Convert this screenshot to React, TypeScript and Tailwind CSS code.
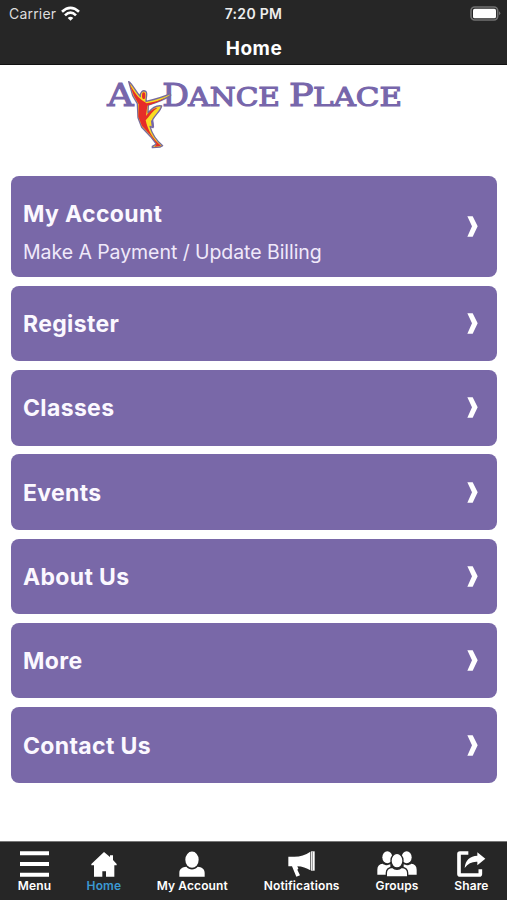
import React from 'react';

interface MenuItem {
  title: string;
  subtitle?: string;
}

interface Tab {
  label: string;
  width: string;
  icon: React.ReactNode;
  active?: boolean;
}

const menuItems: MenuItem[] = [
  { title: 'My Account', subtitle: 'Make A Payment / Update Billing' },
  { title: 'Register' },
  { title: 'Classes' },
  { title: 'Events' },
  { title: 'About Us' },
  { title: 'More' },
  { title: 'Contact Us' },
];

const MenuIcon = () => (
  <svg width="29" height="26" viewBox="0 0 87 78" fill="currentColor">
    <path d="M0 1h87v12H0zM0 33h87v12H0zM0 65h87v12H0z" />
  </svg>
);

const HomeIcon = () => (
  <svg width="26" height="26" viewBox="0 0 78 78" fill="currentColor">
    <path d="M39 3 L57 18 V13 H66 V27 L77 39 V43 H70 V77 H45 V61 H34 V77 H9 V43 H1 V39Z" />
  </svg>
);

const AccountIcon = () => (
  <svg width="26" height="26" viewBox="0 0 78 78" fill="currentColor">
    <ellipse cx="39" cy="26" rx="20" ry="24.500" />
    <path d="M1 77V66C1 53 10 48 22 47C31 58 47 58 56 47C68 48 77 53 77 66V77Z" />
  </svg>
);

const NotificationsIcon = () => (
  <svg width="27" height="26" viewBox="0 0 81 78" fill="currentColor">
    <path d="M1 17 H19 C37 17 52 12 67 2 V58 C56 51 42 46 28 46 L31 53 L28 56 L36 73 L25 77 L12 46 H1Z" />
    <path d="M69 1h11v58H69z" />
    <path d="M73 2v56" stroke="#555555" strokeWidth="2" />
  </svg>
);

const GroupsIcon = () => (
  <svg width="40" height="26" viewBox="0 0 120 78" fill="currentColor">
    <ellipse cx="31" cy="19" rx="15" ry="18" />
    <ellipse cx="89" cy="19" rx="15" ry="18" />
    <path d="M1 71V56C1 45 7 39 17 38C24 43 32 44 40 40V71ZM119 71V56C119 45 113 39 103 38C96 43 88 44 80 40V71Z" />
    <path
      d="M28 78V66C28 54 34 50 46 49C54 57 66 57 74 49C86 50 92 54 92 66V78Z"
      stroke="#262626"
      strokeWidth="4"
    />
    <ellipse cx="60" cy="29" rx="18" ry="22" stroke="#262626" strokeWidth="4" />
  </svg>
);

const ShareIcon = () => (
  <svg width="29" height="26" viewBox="0 0 87 78" fill="currentColor">
    <path d="M34 6H9Q6 6 6 9V69Q6 72 9 72H67Q70 72 70 69V55" fill="none" stroke="currentColor" strokeWidth="11" />
    <path d="M23 51C25 27 39 15 61 14V4L85 23L61 43V32C46 31 33 37 23 51Z" />
  </svg>
);

const tabs: Tab[] = [
  { label: 'Menu', width: 'w-[33px]', icon: <MenuIcon /> },
  { label: 'Home', width: 'w-[35px]', icon: <HomeIcon />, active: true },
  { label: 'My Account', width: 'w-[71px]', icon: <AccountIcon /> },
  { label: 'Notifications', width: 'w-[77px]', icon: <NotificationsIcon /> },
  { label: 'Groups', width: 'w-[43px]', icon: <GroupsIcon /> },
  { label: 'Share', width: 'w-[35px]', icon: <ShareIcon /> },
];

const StatusBar = () => (
  <div className="relative flex h-7 items-center justify-between pb-px pl-[9px] pr-[6px]">
    <div className="flex items-center gap-[5px]">
      <span className="text-[14px] tracking-[0.2px] text-[#dddddd]">Carrier</span>
      <svg className="-mt-px" width="19" height="15" viewBox="0 0 57 45" fill="none" stroke="#ffffff" strokeWidth="8">
        <path d="M3 17Q28.500 -6 54 17M12 28Q28.500 12 45 28" />
        <path d="M20 36Q28.500 28 37 36L28.500 44Z" fill="#ffffff" stroke="none" />
      </svg>
    </div>
    <span className="absolute inset-x-0 text-center text-[14px] font-semibold tracking-[0.300px] text-[#eeeeee]">
      7:20 PM
    </span>
    <svg width="31" height="15" viewBox="0 0 93 45">
      <rect x="3" y="3" width="80" height="39" rx="11" fill="#262626" stroke="#717171" strokeWidth="5" />
      <rect x="9" y="8" width="69" height="29" rx="5" fill="#ffffff" />
      <path d="M87 16Q95 22 87 28Z" fill="#717171" />
    </svg>
  </div>
);

const Logo = () => (
  <svg
    className="h-[85px] w-[310px]"
    viewBox="0 0 930 255"
    fill="#7766ab"
    stroke="#7766ab"
    strokeWidth="3.500"
    fontFamily="'DejaVu Serif', serif"
  >
    <text x="22" y="109" fontSize="97" textLength="79" lengthAdjust="spacingAndGlyphs">A</text>
    <text x="187" y="109" fontSize="97" textLength="80" lengthAdjust="spacingAndGlyphs">D</text>
    <text x="265" y="109" fontSize="80" textLength="275" lengthAdjust="spacingAndGlyphs">ANCE</text>
    <text x="567" y="109" fontSize="97" textLength="74" lengthAdjust="spacingAndGlyphs">P</text>
    <text x="639" y="109" fontSize="80" textLength="267" lengthAdjust="spacingAndGlyphs">LACE</text>
    <g strokeLinejoin="round">
      <path
        d="M86 35C96 40 104 60 121 80C119 67 129 59 137 64C144 70 138 80 138 94C162 89 185 83 211 71L212 76C190 91 165 99 145 105L144 129C157 113 172 105 185 108C182 122 168 132 158 149C156 155 161 163 159 173L150 169C154 184 167 210 188 227L181 231L157 233L157 229L169 222L152 200L125 172L114 143L112 101L98 77Z"
        fill="#f9dc22"
        stroke="#776b9d"
        strokeWidth="4"
      />
      <path
        d="M87 38C97 58 109 77 126 91L140 100C162 97 180 91 193 85C180 95 163 100 142 107L138 138C149 123 163 112 173 113C157 123 148 139 137 151C143 179 158 208 183 227L164 230L170 221L151 195L126 168L115 140L116 103L102 78Z"
        fill="#e62c28"
        stroke="none"
      />
      <ellipse cx="131" cy="77" rx="5" ry="10" fill="#e62c28" stroke="none" />
      <path d="M156 151L159 172" fill="none" stroke="#7766ab" strokeWidth="7" />
    </g>
  </svg>
);

const Chevron = () => (
  <svg width="11" height="21" viewBox="0 0 33 63" fill="#ffffff">
    <path d="M1 1H17L32 31L17 62H1L15 31Z" />
  </svg>
);

const MenuCard = ({ title, subtitle }: MenuItem) => (
  <button
    className={`flex w-full shrink-0 items-center justify-between rounded-[8px] bg-[#7968a8] pl-3 pr-[19px] text-left text-white ${
      subtitle ? 'h-[101px]' : 'h-[75.500px]'
    }`}
  >
    <span className={`flex flex-col gap-2 ${subtitle ? 'pt-3' : 'pt-px'}`}>
      <span className="text-[23px] leading-[30px] font-bold tracking-[0.35px] text-[#fbf8ff]">{title}</span>
      {subtitle && <span className="text-[19.500px] leading-[30px] tracking-[-0.060px] text-[#f0e9fa]">{subtitle}</span>}
    </span>
    <Chevron />
  </button>
);

const TabBar = () => (
  <nav className="flex h-[59px] shrink-0 justify-between border-t border-[#777777] bg-[#262626] px-[18px] pt-[9px]">
    {tabs.map(({ label, width, icon, active }) => (
      <div key={label} className={`flex flex-col items-center text-white ${width}`}>
        {icon}
        <span
          className={`mt-px text-[12px] leading-4 font-semibold tracking-[0.120px] whitespace-nowrap ${
            active ? 'text-[#3b99d2]' : 'text-white'
          }`}
        >
          {label}
        </span>
      </div>
    ))}
  </nav>
);

export default function App() {
  return (
    <div className="flex h-[900px] w-[507px] flex-col overflow-hidden bg-white font-['Inter',sans-serif]">
      <header className="h-[64.500px] shrink-0 border-b border-[#111111] bg-[#262626]">
        <StatusBar />
        <h1 className="mt-[7px] pl-px text-center text-[19px] leading-7 font-bold tracking-[0.500px] text-white">Home</h1>
      </header>
      <div className="flex h-[111.500px] shrink-0 pl-[100px] pt-[5.500px]">
        <Logo />
      </div>
      <main className="flex flex-1 flex-col gap-[8.800px] pl-[11px] pr-[10px]">
        {menuItems.map((item) => (
          <MenuCard key={item.title} {...item} />
        ))}
      </main>
      <TabBar />
    </div>
  );
}
